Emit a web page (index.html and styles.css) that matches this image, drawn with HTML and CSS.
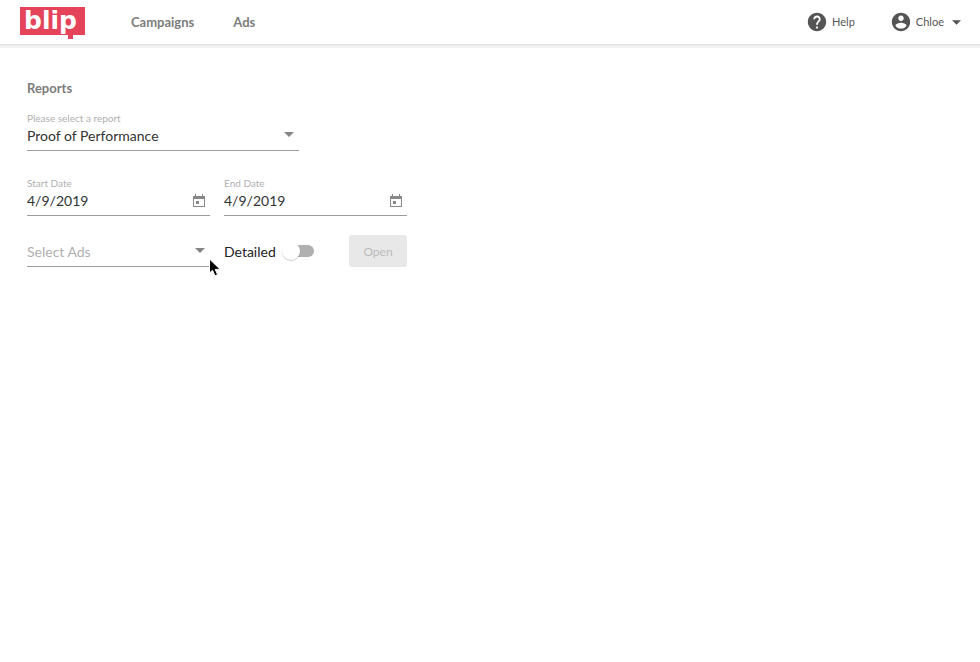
FILE: index.html
```html
<!DOCTYPE html>
<html lang="en">
<head>
    <meta charset="UTF-8">
    <meta name="viewport" content="width=device-width, initial-scale=1.0">
    <title>Reports</title>
    <link rel="stylesheet" href="styles.css">
</head>
<body>
    <header class="toolbar">
        <a class="logo" href="#">
            <svg width="66" height="32" viewBox="0 0 66 32" role="img" aria-label="blip">
                <path fill="#e5435a" d="M1 0h65v28H54v4h-5v-4H1z"/>
                <text class="logo-text" x="5" y="22">blip</text>
            </svg>
        </a>
        <nav class="main-nav">
            <a href="#">Campaigns</a>
            <a href="#">Ads</a>
        </nav>
        <div class="user-nav">
            <button class="user-button" type="button">
                <svg width="22" height="22" viewBox="0 0 24 24"><path fill="#555" d="M12 2C6.480 2 2 6.480 2 12s4.480 10 10 10 10-4.480 10-10S17.520 2 12 2zm1 17h-2v-2h2v2zm2.070-7.750l-.9.920C13.450 12.900 13 13.500 13 15h-2v-.5c0-1.100.45-2.100 1.170-2.830l1.240-1.260c.37-.36.59-.86.59-1.410 0-1.100-.9-2-2-2s-2 .9-2 2H8c0-2.210 1.790-4 4-4s4 1.790 4 4c0 .88-.36 1.680-.93 2.250z"/></svg>
                <span>Help</span>
            </button>
            <button class="user-button" type="button">
                <svg width="22" height="22" viewBox="0 0 24 24"><path fill="#555" d="M12 2C6.480 2 2 6.480 2 12s4.480 10 10 10 10-4.480 10-10S17.520 2 12 2zm0 3c1.660 0 3 1.340 3 3s-1.340 3-3 3-3-1.340-3-3 1.340-3 3-3zm0 14.200c-2.500 0-4.710-1.280-6-3.220.03-1.990 4-3.080 6-3.080 1.990 0 5.970 1.090 6 3.080-1.290 1.940-3.500 3.220-6 3.220z"/></svg>
                <span>Chloe</span>
                <svg class="caret" width="9" height="5" viewBox="0 0 10 5"><path fill="#555" d="M0 0h10L5 5z"/></svg>
            </button>
        </div>
    </header>

    <main class="content">
        <h1 class="title">Reports</h1>

        <form class="report-form">
            <div class="field field-wide">
                <label for="report">Please select a report</label>
                <div class="control">
                    <select id="report">
                        <option>Proof of Performance</option>
                    </select>
                    <svg class="arrow" width="10" height="5" viewBox="0 0 10 5"><path fill="#858585" d="M0 0h10L5 5z"/></svg>
                </div>
            </div>

            <div class="row">
                <div class="field">
                    <label for="startDate">Start Date</label>
                    <div class="control">
                        <input type="text" id="startDate" value="4/9/2019">
                        <svg class="calendar" width="12" height="14" viewBox="0 0 12 14"><path fill="#888" fill-rule="evenodd" d="M2 0h1v2h6V0h1v2h2v11H0V2h2zM1 5v7h10V5zM3 7h3v3H3z"/></svg>
                    </div>
                </div>
                <div class="field">
                    <label for="endDate">End Date</label>
                    <div class="control">
                        <input type="text" id="endDate" value="4/9/2019">
                        <svg class="calendar" width="12" height="14" viewBox="0 0 12 14"><path fill="#888" fill-rule="evenodd" d="M2 0h1v2h6V0h1v2h2v11H0V2h2zM1 5v7h10V5zM3 7h3v3H3z"/></svg>
                    </div>
                </div>
            </div>

            <div class="row row-actions">
                <div class="field">
                    <div class="control">
                        <select id="ads" class="placeholder" aria-label="Select Ads">
                            <option>Select Ads</option>
                        </select>
                        <svg class="arrow" width="10" height="5" viewBox="0 0 10 5"><path fill="#858585" d="M0 0h10L5 5z"/></svg>
                    </div>
                </div>
                <div class="actions">
                    <label for="detailed">Detailed</label>
                    <input type="checkbox" id="detailed" class="switch">
                    <button class="open-button" type="submit" disabled>Open</button>
                </div>
            </div>
        </form>
    </main>

    <svg class="cursor" width="12" height="19" viewBox="0 0 12 19"><path fill="#000" stroke="#fff" d="M.5 1v14l3-2.700 2.500 5.500 2.600-1.200-2.400-5.200h5z"/></svg>
</body>
</html>
```
FILE: styles.css
```css
* {
    box-sizing: border-box;
}

body {
    font-family: Lato, "Liberation Sans", sans-serif;
    margin: 0;
    background-color: #fff;
    color: #333;
}

button,
input,
select {
    font-family: inherit;
    margin: 0;
}

.toolbar {
    display: flex;
    align-items: center;
    height: 44px;
    padding: 0 19px;
    box-shadow: 0 1px 1px #e2e2e2, 0 4px 0 #f2f2f2;
}

.logo {
    height: 32px;
    margin-top: 2px;
}

.logo-text {
    font-family: "DejaVu Sans", sans-serif;
    font-size: 25px;
    font-weight: bold;
    fill: #fff;
}

.main-nav {
    display: flex;
    gap: 39px;
    margin-left: 46px;
}

.main-nav a {
    color: #7c7c7c;
    font-size: 13px;
    font-weight: bold;
    line-height: 20px;
    text-decoration: none;
}

.user-nav {
    display: flex;
    gap: 35px;
    margin-left: auto;
}

.user-button {
    display: flex;
    align-items: center;
    gap: 4px;
    padding: 0;
    border: none;
    background: none;
    color: #555;
    font-size: 11px;
    line-height: 22px;
}

.caret {
    margin-left: 4px;
}

.content {
    padding: 34px 27px;
}

.title {
    margin: 0 0 14px;
    color: #7c7c7c;
    font-size: 13px;
    font-weight: bold;
    line-height: 20px;
}

.field {
    width: 183px;
}

.field-wide {
    width: 272px;
}

.field label {
    display: block;
    color: #b0b0b0;
    font-size: 10px;
    line-height: 13px;
}

.control {
    display: flex;
    align-items: center;
    height: 26px;
    padding: 0 5px 3px 0;
    border-bottom: 1px solid #9c9c9c;
}

.control select,
.control input {
    flex: 1;
    min-width: 0;
    height: 20px;
    padding: 0;
    border: none;
    outline: none;
    background: none;
    color: #333;
    font-size: 14px;
    line-height: 20px;
    appearance: none;
}

.control .placeholder {
    color: #b0b0b0;
}

.arrow {
    margin-bottom: 4px;
}

.row {
    display: flex;
    gap: 14px;
    margin-top: 26px;
}

.row-actions {
    align-items: flex-end;
    margin-top: 19px;
}

.actions {
    display: flex;
    flex: 0 0 183px;
    align-items: center;
    height: 32px;
    color: #222;
    font-size: 14px;
}

.switch {
    position: relative;
    width: 26px;
    height: 12px;
    margin-left: 12px;
    border-radius: 6px;
    background-color: #b0b0b0;
    appearance: none;
}

.switch::before {
    content: "";
    position: absolute;
    top: -3px;
    left: -6px;
    width: 18px;
    height: 18px;
    border-radius: 50%;
    background-color: #fff;
    box-shadow: 0 1px 1px rgba(0,0,0,0.2);
}

.open-button {
    width: 58px;
    height: 32px;
    margin-left: auto;
    border: none;
    border-radius: 3px;
    background-color: #e8e8e8;
    color: #bbb;
    font-size: 12px;
}

/* pointer sits over the form */
.cursor {
    position: absolute;
    top: 258px;
    left: 209px;
}
```
